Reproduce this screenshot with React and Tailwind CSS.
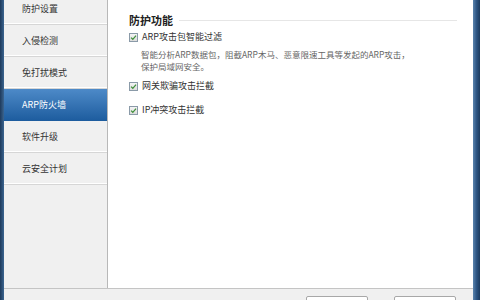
const font = { fontFamily: '"Noto Sans CJK SC", "Noto Sans", sans-serif' };

const navItems = ['防护设置', '入侵检测', '免打扰模式', 'ARP防火墙', '软件升级', '云安全计划'];

function Check({ label }) {
  return (
    <label className="flex h-[12px] items-center gap-[4px] text-[9px] leading-[12px] text-[#333]">
      <span className="flex h-[9px] w-[9px] items-center justify-center border border-[#8a9aa8] bg-gradient-to-b from-[#f4f4f4] to-[#dcdcdc]">
        <svg viewBox="0 0 10 10" className="h-[7px] w-[7px]">
          <path d="M1.5 5.2 L4 7.6 L8.6 2.4" fill="none" stroke="#3f8f3a" strokeWidth="1.8" />
        </svg>
      </span>
      {label}
    </label>
  );
}

export default function App() {
  return (
    <div className="flex h-[300px] w-[480px] overflow-hidden bg-white" style={font}>
      <div className="w-[4px] bg-gradient-to-r from-[#1e3a5c] to-[#3b6590]" />
      <div className="flex min-w-0 flex-1 flex-col">
        <div className="flex min-h-0 flex-1">
          {/* sidebar */}
          <div className="w-[104px] shrink-0 border-r border-[#b8b8b8] bg-[#f0f0f0]">
            <div className="-mt-[7px]">
              {navItems.map((item, i) =>
                i === 3 ? (
                  <div key={item} className="flex h-[32px] items-center bg-gradient-to-b from-[#4d8ac8] to-[#1c5c9e] pl-[18px] text-[9px] text-white">
                    {item}
                  </div>
                ) : (
                  <div key={item} className="flex h-[32px] items-center border-b border-[#d6d6d6] pl-[18px] text-[9px] text-[#333] shadow-[inset_0_-1px_0_#ffffff]">
                    {item}
                  </div>
                )
              )}
            </div>
          </div>
          {/* content */}
          <div className="flex-1 pl-[21px] pr-[16px] pt-[13px]">
            <div className="flex h-[14px] items-center gap-[6px]">
              <span className="text-[11px] font-bold leading-[14px] text-[#222]">防护功能</span>
              <div className="h-px flex-1 bg-[#e6e6e6]" />
            </div>
            <div className="mt-[4px]">
              <Check label="ARP攻击包智能过滤" />
              <p className="mt-[5px] pl-[12px] text-[8.5px] leading-[12px] text-[#666]">
                智能分析ARP数据包，阻截ARP木马、恶意限速工具等发起的ARP攻击，
                <br />
                保护局域网安全。
              </p>
            </div>
            <div className="mt-[8px]">
              <Check label="网关欺骗攻击拦截" />
            </div>
            <div className="mt-[12px]">
              <Check label="IP冲突攻击拦截" />
            </div>
          </div>
        </div>
        {/* bottom bar */}
        <div className="relative h-[12px] shrink-0 border-t border-[#c4c4c4] bg-[#f0f0f0]">
          <div className="absolute left-[302px] top-[7px] h-[12px] w-[62px] rounded-[2px] border border-[#a8a8a8] bg-white" />
          <div className="absolute left-[390px] top-[7px] h-[12px] w-[62px] rounded-[2px] border border-[#a8a8a8] bg-white" />
        </div>
      </div>
      <div className="w-[7px] bg-gradient-to-r from-[#5a83ad] via-[#2d5583] to-[#1c3a5e]" />
    </div>
  );
}
